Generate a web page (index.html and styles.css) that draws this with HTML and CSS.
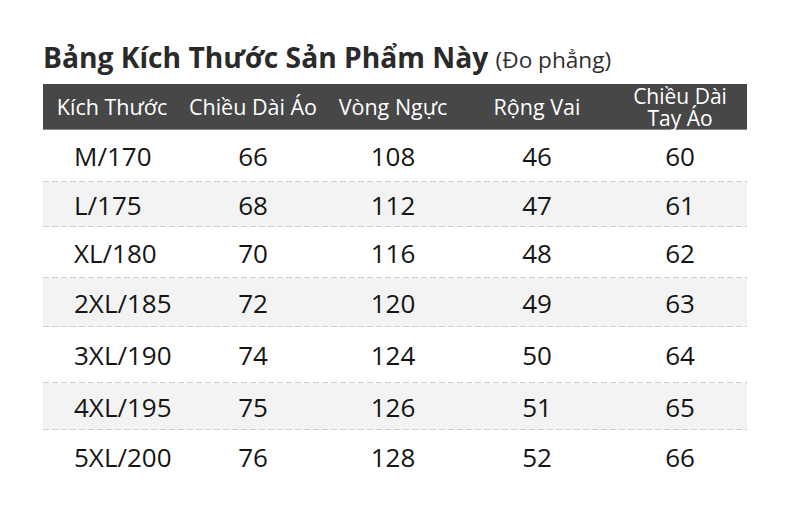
FILE: index.html
```html
<!DOCTYPE html>
<html lang="vi">
<head>
<meta charset="utf-8">
<title>Bảng Kích Thước</title>
<link rel="stylesheet" href="styles.css">
</head>
<body>
<div class="page">
  <h1 class="title">Bảng Kích Thước Sản Phẩm Này <span class="sub">(Đo phẳng)</span></h1>
  <div class="table">
    <div class="row head">
      <div class="cell">Kích Thước</div>
      <div class="cell">Chiều Dài Áo</div>
      <div class="cell">Vòng Ngực</div>
      <div class="cell">Rộng Vai</div>
      <div class="cell two"><span class="ln">Chiều Dài</span><span class="ln">Tay Áo</span></div>
    </div>
    <div class="row r1"><div class="cell size">M/170</div><div class="cell">66</div><div class="cell">108</div><div class="cell">46</div><div class="cell">60</div></div>
    <div class="row r2 alt"><div class="cell size">L/175</div><div class="cell">68</div><div class="cell">112</div><div class="cell">47</div><div class="cell">61</div></div>
    <div class="row r3"><div class="cell size">XL/180</div><div class="cell">70</div><div class="cell">116</div><div class="cell">48</div><div class="cell">62</div></div>
    <div class="row r4 alt"><div class="cell size">2XL/185</div><div class="cell">72</div><div class="cell">120</div><div class="cell">49</div><div class="cell">63</div></div>
    <div class="row r5"><div class="cell size">3XL/190</div><div class="cell">74</div><div class="cell">124</div><div class="cell">50</div><div class="cell">64</div></div>
    <div class="row r6 alt"><div class="cell size">4XL/195</div><div class="cell">75</div><div class="cell">126</div><div class="cell">51</div><div class="cell">65</div></div>
    <div class="row r7 last"><div class="cell size">5XL/200</div><div class="cell">76</div><div class="cell">128</div><div class="cell">52</div><div class="cell">66</div></div>
  </div>
</div>
</body>
</html>
```
FILE: styles.css
```css
html, body {
  margin: 0;
  padding: 0;
  background: #ffffff;
}
body {
  font-family: "Open Sans", "Noto Sans", sans-serif;
  color: #151515;
}
.page {
  width: 790px;
  height: 513px;
  padding: 40px 0 0 43px;
  box-sizing: border-box;
}
.title {
  margin: 0 0 10px 0;
  height: 34px;
  font-size: 28.2px;
  line-height: 34px;
  font-weight: 700;
  color: #2a2a2a;
  white-space: nowrap;
}
.sub {
  font-size: 22.6px;
  line-height: 1;
  font-weight: 400;
  color: #2e2e2e;
}
.table {
  width: 704px;
}
.row {
  display: grid;
  grid-template-columns: 138px 144px 136px 152px 134px;
  align-items: center;
  font-size: 26px;
  background-image: repeating-linear-gradient(to right, #cfcfcf 0 6px, transparent 6px 9px);
  background-size: 100% 1px;
  background-position: left bottom;
  background-repeat: no-repeat;
}
.row.alt {
  background-color: #f3f3f3;
}
.row.last {
  background-image: none;
}
.cell {
  text-align: center;
  line-height: 30px;
}
.cell.size {
  text-align: left;
  padding-left: 31px;
}
.head {
  height: 46px;
  background: #474747;
  border-bottom: 1px solid #8a8a8a;
  box-sizing: border-box;
  color: #ffffff;
  font-size: 21.5px;
}
.head .cell {
  line-height: 26px;
}
.head .cell.two {
  display: flex;
  flex-direction: column;
  align-items: center;
  font-size: 21px;
}
.head .ln {
  line-height: 22px;
  display: block;
}
.r1 { height: 52px; }
.r2 { height: 45px; }
.r3 { height: 51px; }
.r4 { height: 49px; }
.r5 { height: 56px; }
.r6 { height: 47px; }
.r7 { height: 53px; }
```
